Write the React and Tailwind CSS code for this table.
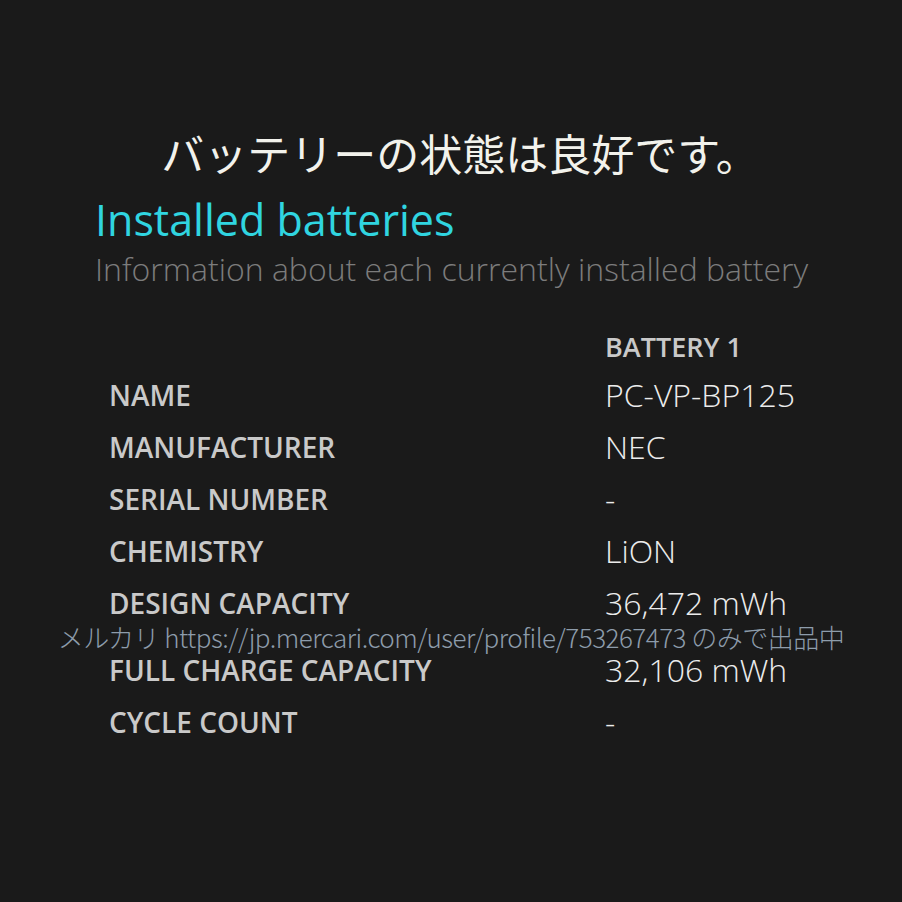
const ROWS = [
  ['NAME', 'PC-VP-BP125'],
  ['MANUFACTURER', 'NEC'],
  ['SERIAL NUMBER', '-'],
  ['CHEMISTRY', 'LiON'],
  ['DESIGN CAPACITY', '36,472 mWh'],
];

const ROWS2 = [
  ['FULL CHARGE CAPACITY', '32,106 mWh'],
  ['CYCLE COUNT', '-'],
];

function Row({ label, value }) {
  return (
    <div className="flex items-center h-[52px]">
      <div className="w-[496px] text-[28px] font-semibold text-[#c9c9c9]">{label}</div>
      <div className="text-[32px] font-light text-[#ececec]">{value}</div>
    </div>
  );
}

export default function App() {
  return (
    <div className="w-[902px] h-[902px] bg-[#1a1a1a] overflow-hidden relative" style={{ fontFamily: '"Open Sans", "Noto Sans", sans-serif' }}>
      <h1 className="pt-[128px] pl-[18px] text-center text-[43px] leading-[48px] text-[#f2f2ec] font-normal"
        style={{ fontFamily: '"Noto Sans CJK JP", sans-serif' }}>
        バッテリーの状態は良好です。
      </h1>

      <div className="pl-[95px]">
        <h2 className="mt-[21px] text-[43px] leading-[46px] text-[#30d5e0]">Installed batteries</h2>
        <p className="mt-[8px] text-[32px] leading-[36px] font-light text-[#7c7c7c]">Information about each currently installed battery</p>
      </div>

      {/* battery table */}
      <div className="pl-[109px] mt-[45px]">
        <div className="flex items-center h-[37px] pb-[7px]">
          <div className="w-[496px]" />
          <div className="text-[27px] font-semibold text-[#c9c9c9]">BATTERY 1</div>
        </div>
        {ROWS.map(([l, v]) => <Row key={l} label={l} value={v} />)}
        <div className="h-[15px]" />
        {ROWS2.map(([l, v]) => <Row key={l} label={l} value={v} />)}
      </div>

      {/* watermark */}
      <div className="absolute left-0 right-0 top-[620px] text-center text-[26px] leading-[34px] font-light text-[#8d9cab] tracking-[-0.5px]"
        style={{ fontFamily: '"Noto Sans CJK JP", sans-serif' }}>
        メルカリ https://jp.mercari.com/user/profile/753267473 のみで出品中
      </div>
    </div>
  );
}
